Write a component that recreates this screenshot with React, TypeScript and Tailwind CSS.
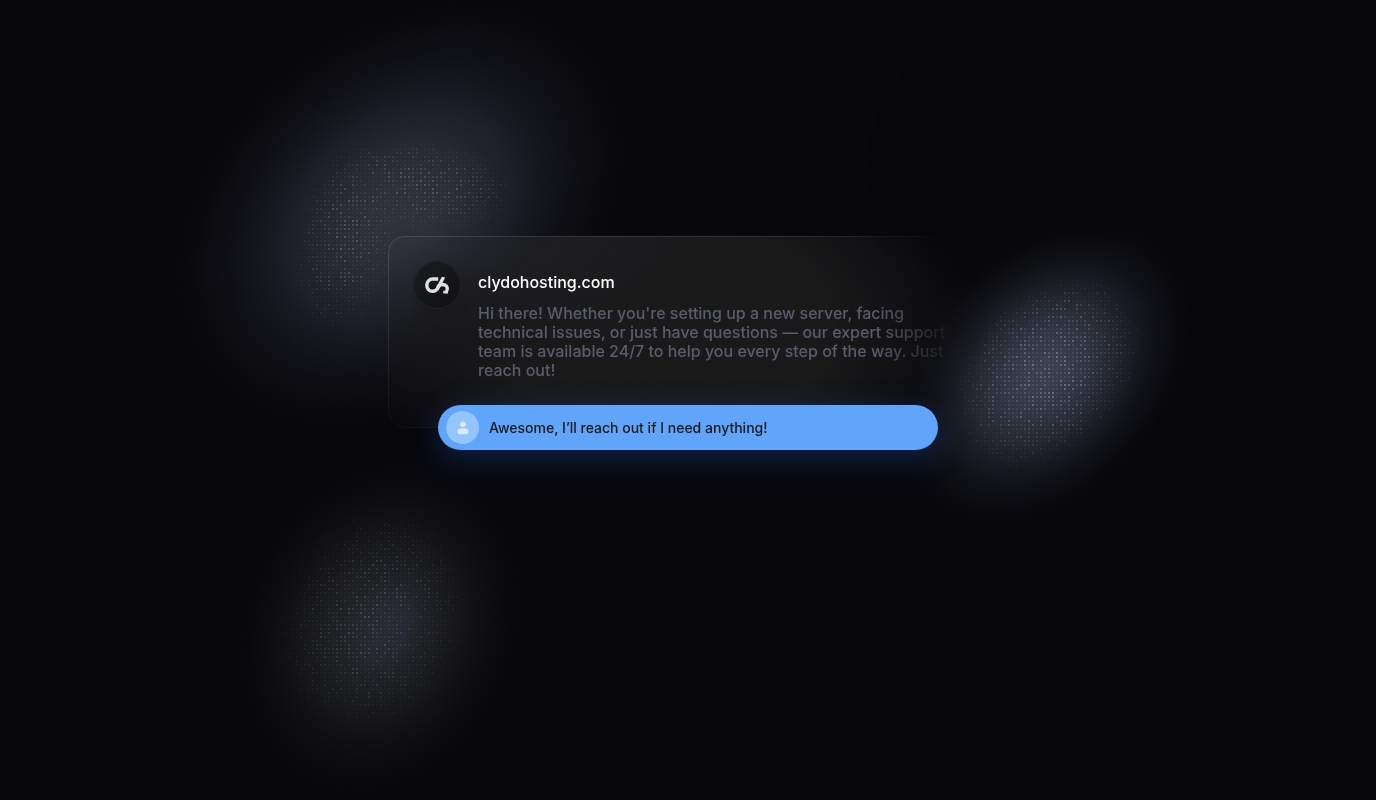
type Spot = { cx: number; cy: number; rx: number; ry: number; angle: number; peak: number };

type Glow = Omit<Spot, "peak"> & { id: string; color: string; opacity: number };

const glows: Glow[] = [
  { id: "north-west", cx: 400, cy: 214, rx: 256, ry: 188, angle: -40, color: "#30333e", opacity: 0.98 },
  { id: "east", cx: 1043, cy: 372, rx: 174, ry: 124, angle: -48, color: "#3b404e", opacity: 0.98 },
  { id: "south-west", cx: 380, cy: 628, rx: 178, ry: 142, angle: -68, color: "#26272b", opacity: 0.98 },
  { id: "south-west-core", cx: 390, cy: 628, rx: 62, ry: 38, angle: -65, color: "#2a3040", opacity: 0.5 },
];

const stops: [number, number][] = [
  [0, 1],
  [15, 0.95],
  [30, 0.8],
  [45, 0.59],
  [60, 0.36],
  [75, 0.17],
  [90, 0.04],
  [100, 0],
];

const clusters: { color: string; spots: Spot[] }[] = [
  {
    color: "#70768e",
    spots: [
      { cx: 347, cy: 234, rx: 56, ry: 108, angle: 12, peak: 0.68 },
      { cx: 420, cy: 184, rx: 108, ry: 50, angle: 6, peak: 0.68 },
    ],
  },
  {
    color: "#858ca6",
    spots: [{ cx: 1046, cy: 370, rx: 116, ry: 85, angle: -48, peak: 0.82 }],
  },
  {
    color: "#747986",
    spots: [{ cx: 372, cy: 618, rx: 124, ry: 98, angle: -70, peak: 0.5 }],
  },
];

function noise(x: number, y: number) {
  const value = Math.sin(x * 12.9898 + y * 78.233) * 43758.5453;
  return value - Math.floor(value);
}

function strength(spot: Spot, x: number, y: number) {
  const a = (-spot.angle * Math.PI) / 180;
  const dx = x - spot.cx;
  const dy = y - spot.cy;
  const u = (dx * Math.cos(a) - dy * Math.sin(a)) / spot.rx;
  const v = (dx * Math.sin(a) + dy * Math.cos(a)) / spot.ry;
  return Math.max(0, 1 - (u * u + v * v)) ** 1.4 * spot.peak;
}

// Dots are grouped by opacity level so each level is a single path.
function dotLevels(spots: Spot[]) {
  const levels: string[] = Array.from({ length: 40 }, () => "");
  for (let x = 200; x < 1200; x += 4) {
    for (let y = 100; y < 780; y += 4) {
      const base = Math.max(...spots.map((spot) => strength(spot, x, y)));
      if (base <= 0) continue;
      const n = noise(x, y);
      const level = Math.floor(base * (0.16 + 0.74 * n * n * n) * 40);
      if (level > 0) levels[level] += `M${x} ${y}h2v2h-2z`;
    }
  }
  return levels;
}

const dots = clusters.map((cluster) => ({ color: cluster.color, levels: dotLevels(cluster.spots) }));

function Backdrop() {
  return (
    <svg
      aria-hidden="true"
      className="pointer-events-none absolute inset-0 h-full w-full"
      viewBox="0 0 1376 800"
      preserveAspectRatio="xMidYMin slice"
    >
      <defs>
        {glows.map((glow) => (
          <radialGradient key={glow.id} id={glow.id}>
            {stops.map(([offset, alpha]) => (
              <stop key={offset} offset={`${offset}%`} stopColor={glow.color} stopOpacity={alpha * glow.opacity} />
            ))}
          </radialGradient>
        ))}
        <radialGradient id="shade">
          <stop offset="0%" stopColor="#070709" />
          <stop offset="80%" stopColor="#070709" stopOpacity="0.7" />
          <stop offset="100%" stopColor="#070709" stopOpacity="0" />
        </radialGradient>
      </defs>
      <ellipse cx="1000" cy="165" rx="155" ry="155" fill="url(#shade)" />
      {glows.map((glow) => (
        <ellipse
          key={glow.id}
          cx={glow.cx}
          cy={glow.cy}
          rx={glow.rx}
          ry={glow.ry}
          transform={`rotate(${glow.angle} ${glow.cx} ${glow.cy})`}
          fill={`url(#${glow.id})`}
        />
      ))}
      {dots.map(({ color, levels }) =>
        levels.map((d, level) =>
          d ? <path key={`${color}-${level}`} d={d} fill={color} fillOpacity={level / 40} shapeRendering="crispEdges" /> : null,
        ),
      )}
    </svg>
  );
}

function Logo() {
  return (
    <svg aria-hidden="true" viewBox="0 0 24 17" className="h-[17px] w-6" fill="none" stroke="#dedfe3" strokeWidth="3.4">
      <path d="M13.2 2H7.8C4.2 2 1.8 4.8 1.8 8.2c0 3.5 2.4 6.1 5.8 6.1 2.8 0 4.4-1.4 5.7-4.1L18.6 0" />
      <path d="M12.6 10.4c1.2-2.1 2.8-2.9 4.8-2.9 3.4 0 5.2 2 4.8 4.8-.2 1.2-.7 2.4-1.4 4" />
      <path d="M18.2 15.1h3.2" strokeWidth="2.6" />
    </svg>
  );
}

function UserIcon() {
  return (
    <svg aria-hidden="true" viewBox="0 0 12 14" className="h-[14px] w-3" fill="#dbeafe">
      <circle cx="6" cy="3.2" r="2.8" />
      <path d="M3.6 7.4h4.8c2 0 3.2 1.3 3.2 3 0 1.8-1.2 2.9-3.2 2.9H3.6c-2 0-3.2-1.1-3.2-2.9 0-1.7 1.2-3 3.2-3z" />
    </svg>
  );
}

export default function App() {
  return (
    <main className="relative min-h-screen overflow-hidden bg-[#08080c] px-4 pt-[236px] font-['Inter',sans-serif]">
      <Backdrop />
      <section className="relative mx-auto flex max-w-[600px] flex-col items-center">
        <article className="relative w-full rounded-2xl border border-transparent px-6 pt-6 pb-[47px]">
          <div
            aria-hidden="true"
            className="absolute -inset-px rounded-2xl backdrop-blur-md [mask-image:linear-gradient(to_right,black_60%,transparent_92%)]"
          />
          <div
            aria-hidden="true"
            className="absolute -inset-px rounded-2xl bg-[radial-gradient(ellipse_54%_110%_at_46%_48%,#1a1a1b_0%,#19191a_52%,rgba(25,25,26,0.6)_74%,rgba(25,25,26,0.15)_92%,transparent_100%)]"
          />
          <div
            aria-hidden="true"
            className="absolute -inset-px rounded-2xl bg-[radial-gradient(ellipse_at_top_left,rgba(58,61,78,0.5),rgba(44,46,56,0.25)_18%,transparent_38%)]"
          />
          <div
            aria-hidden="true"
            className="absolute -inset-px rounded-2xl border border-white/12 [mask-composite:intersect] [mask-image:linear-gradient(to_right,black_60%,transparent_96%),linear-gradient(to_bottom,black_20%,rgba(0,0,0,0.3))]"
          />
          <div className="relative flex gap-[17px] [mask-image:linear-gradient(to_right,black_84%,transparent_99%)]">
            <div className="flex size-12 shrink-0 items-center justify-center rounded-full border border-white/5 bg-linear-to-br from-[#1b1c21] to-[#101013] shadow-lg">
              <Logo />
            </div>
            <div className="pt-[9px]">
              <h1 className="text-base font-medium text-white">clydohosting.com</h1>
              <p className="mt-[10px] text-base leading-[19px] font-medium text-[#5a5d6a]">
                Hi there! Whether you're setting up a new server, facing technical issues, or just have questions — our
                expert support team is available 24/7 to help you every step of the way. Just reach out!
              </p>
            </div>
          </div>
        </article>
        <div className="relative -mt-[23px] flex h-[45px] w-5/6 items-center gap-[10px] rounded-full bg-[#60a5fa] px-2 shadow-[0_8px_32px_rgba(37,99,235,0.28)]">
          <span className="flex size-[33px] shrink-0 items-center justify-center rounded-full bg-[#93c5fd]">
            <UserIcon />
          </span>
          <p className="text-sm font-medium text-[#18181b]">Awesome, I’ll reach out if I need anything!</p>
        </div>
      </section>
    </main>
  );
}
